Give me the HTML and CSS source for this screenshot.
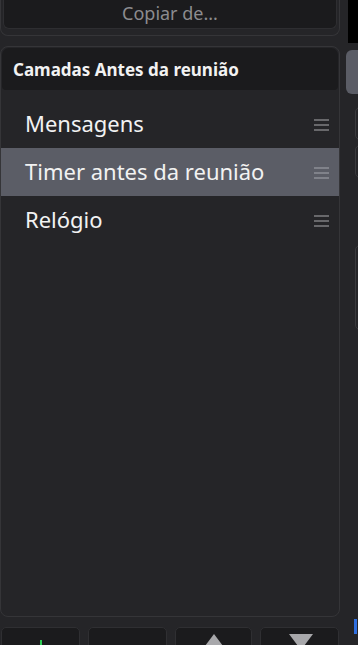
FILE: index.html
```html
<!DOCTYPE html>
<html lang="pt">
<head>
    <meta charset="UTF-8">
    <meta name="viewport" content="width=device-width, initial-scale=1.0">
    <title>Camadas</title>
    <link rel="stylesheet" href="styles.css">
</head>
<body>
    <div class="layout">
        <div class="main-col">
            <div class="copy-box">
                <button class="copy-btn">Copiar de...</button>
            </div>
            <div class="layers-panel">
                <div class="panel-title">Camadas Antes da reunião</div>
                <ul class="layer-list">
                    <li class="layer"><span>Mensagens</span><i class="handle"></i></li>
                    <li class="layer active"><span>Timer antes da reunião</span><i class="handle"></i></li>
                    <li class="layer"><span>Relógio</span><i class="handle"></i></li>
                </ul>
            </div>
            <div class="toolbar">
                <button class="tool add"><span class="plus"></span></button>
                <button class="tool"><span class="minus"></span></button>
                <button class="tool"><span class="tri up"></span></button>
                <button class="tool"><span class="tri down"></span></button>
            </div>
        </div>
        <div class="side-col">
            <div class="side-top"></div>
            <div class="scroll-thumb"></div>
            <div class="side-card c1"></div>
            <div class="side-card c2"></div>
            <div class="side-card c3"></div>
            <div class="side-blue"></div>
        </div>
    </div>
</body>
</html>
```
FILE: styles.css
```css
:root {
    --bg: #252528;
    --bg-dark: #1b1b1d;
    --border: #353538;
    --text: #f2f2f2;
    --muted: #8c8c8f;
    --active: #5b5d66;
    --handle: #68686b;
}
*, *::before, *::after { box-sizing: border-box; margin: 0; padding: 0; }
html, body { height: 100%; }
body {
    background: var(--bg);
    color: var(--text);
    font-family: "Noto Sans", "Open Sans", sans-serif;
    overflow: hidden;
}
.layout { display: flex; height: 645px; }
.main-col { width: 340px; display: flex; flex-direction: column; }
.main-col > * { flex-shrink: 0; }

.copy-box { border: 1px solid var(--border); border-top: none; border-radius: 0 0 8px 8px; padding: 0 2px 6px 2px; margin-top: -10px; }
.copy-btn { width: 100%; height: 39px; padding-top: 8px; background: var(--bg-dark); border: 1px solid #2e2e31; border-top: none; border-radius: 0 0 6px 6px; color: var(--muted); font-family: inherit; font-size: 18px; }

.layers-panel { margin-top: 10px; height: 571px; border: 1px solid var(--border); border-radius: 8px; overflow: hidden; }
.panel-title { margin: 1px 1px 0; height: 42px; background: var(--bg-dark); border-radius: 7px 7px 4px 4px; padding: 0 11px; display: flex; align-items: center; font-size: 17px; font-weight: 700; }
.layer-list { list-style: none; margin-top: 10px; }
.layer { height: 48px; display: flex; align-items: center; justify-content: space-between; padding: 0 10px 0 24px; font-size: 22px; }
.layer span { margin-top: -3px; }
.layer.active { background: var(--active); }
.handle { width: 15px; height: 12px; border-top: 2px solid var(--handle); border-bottom: 2px solid var(--handle); position: relative; margin-top: 2px; }
.handle::after { content: ""; position: absolute; left: 0; right: 0; top: 3px; height: 2px; background: var(--handle); }
.layer.active .handle { border-color: #80828a; }
.layer.active .handle::after { background: #80828a; }

.toolbar { margin-top: 10px; display: grid; grid-template-columns: 79px 79px 77px 79px; gap: 0 8px; padding-left: 1px; }
.tool { height: 30px; background: var(--bg-dark); border: 1px solid #2f2f32; border-radius: 5px; position: relative; }
.plus { position: absolute; left: 38px; top: 12px; width: 2px; height: 14px; background: #2ecc55; }
.minus { position: absolute; left: 32px; top: 22px; width: 14px; height: 2px; background: #d94848; }
.tri { position: absolute; width: 0; height: 0; border-left: 12px solid transparent; border-right: 12px solid transparent; }
.tri.up { top: 6px; border-bottom: 16px solid #a8a8ab; left: 26px; }
.tri.down { top: 6px; border-top: 16px solid #a8a8ab; left: 28px; }

.side-col { flex: 1; position: relative; margin-left: 6px; }
.side-top { position: absolute; left: 2px; right: 0; top: 0; height: 43px; background: #000; }
.scroll-thumb { position: absolute; left: 0; right: -4px; top: 50px; height: 44px; background: var(--active); border-radius: 6px 0 0 6px; }
.side-card { position: absolute; left: 9px; right: -10px; border: 1px solid #3a3a3d; border-radius: 5px; }
.c1 { top: 107px; height: 33px; }
.c2 { top: 145px; height: 33px; }
.c3 { top: 245px; height: 85px; }
.side-blue { position: absolute; left: 8px; width: 3px; top: 619px; height: 15px; background: #2f6fe0; }
```
